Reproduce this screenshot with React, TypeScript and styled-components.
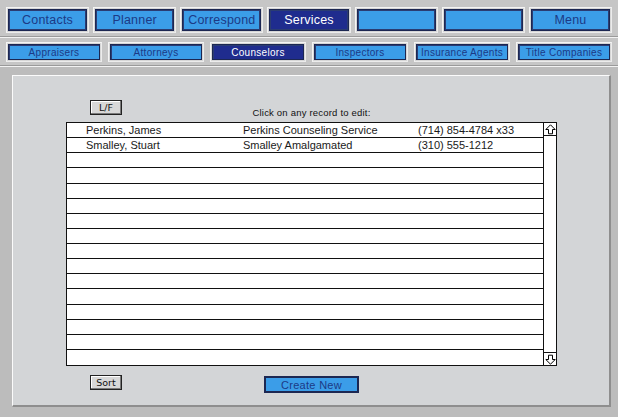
import React from "react";
import styled, { createGlobalStyle } from "styled-components";

const GlobalStyle = createGlobalStyle`
    html, body {
        margin: 0;
        padding: 0;
        background: #bcbcbc;
        font-family: "Liberation Sans", Arial, sans-serif;
    }
`;

interface Record {
    name: string;
    company: string;
    phone: string;
}

const records: Record[] = [
    { name: "Perkins, James", company: "Perkins Counseling Service", phone: "(714) 854-4784 x33" },
    { name: "Smalley, Stuart", company: "Smalley Amalgamated", phone: "(310) 555-1212" },
];

const mainTabs = ["Contacts", "Planner", "Correspond", "Services", "", "", "Menu"];
const subTabs = ["Appraisers", "Attorneys", "Counselors", "Inspectors", "Insurance Agents", "Title Companies"];

const ROW_COUNT = 16;

const ArrowIcon: React.FC<{ down?: boolean }> = ({ down }) => (
    <svg width="11" height="11" viewBox="0 0 11 11" style={{ transform: down ? "rotate(180deg)" : undefined }}>
        <polygon points="5.5,0.8 10.2,5.5 7.5,5.5 7.5,9.8 3.5,9.8 3.5,5.5 0.8,5.5" fill="#fff" stroke="#000" strokeWidth="1" />
    </svg>
);

const App: React.FC = () => {
    const rows = Array.from({ length: ROW_COUNT }, (_, i) => records[i]);
    return (
        <Page>
            <GlobalStyle />
            <Header>
                <MainRow>
                    {mainTabs.map((t, i) => (
                        <Frame key={i}>
                            <MainTab $active={t === "Services"}>{t}</MainTab>
                        </Frame>
                    ))}
                </MainRow>
                <SubRow>
                    {subTabs.map((t) => (
                        <Frame key={t}>
                            <SubTab $active={t === "Counselors"}>{t}</SubTab>
                        </Frame>
                    ))}
                </SubRow>
            </Header>
            <Body>
                <Panel>
                    <Toolbar>
                        <SmallButton>L/F</SmallButton>
                        <Caption>Click on any record to edit:</Caption>
                    </Toolbar>
                    <ListBox>
                        <Rows>
                            {rows.map((r, i) => (
                                <Row key={i}>
                                    <Cell>{r?.name}</Cell>
                                    <Cell>{r?.company}</Cell>
                                    <Cell>{r?.phone}</Cell>
                                </Row>
                            ))}
                        </Rows>
                        <ScrollBar>
                            <ScrollArrow>
                                <ArrowIcon />
                            </ScrollArrow>
                            <ScrollArrow>
                                <ArrowIcon down />
                            </ScrollArrow>
                        </ScrollBar>
                    </ListBox>
                    <Footer>
                        <SmallButton>Sort</SmallButton>
                        <CreateButton>Create New</CreateButton>
                    </Footer>
                </Panel>
            </Body>
        </Page>
    );
};

const Page = styled.div`
    width: 618px;
    height: 417px;
    overflow: hidden;
    background: #bcbcbc;
`;

const Header = styled.div`
    background: #c6c6c6;
`;

const MainRow = styled.div`
    display: grid;
    grid-template-columns: repeat(7, 1fr);
    gap: 4px;
    padding: 7px 6px 3px;
    border-bottom: 1px solid #9a9a9a;
    box-shadow: 0 1px 0 #f2f2f2;
`;

const SubRow = styled.div`
    display: grid;
    grid-template-columns: repeat(6, 1fr);
    gap: 6px;
    padding: 5px 6px 3px;
    border-bottom: 1px solid #9a9a9a;
    box-shadow: 0 1px 0 #f2f2f2;
`;

const Frame = styled.div`
    padding: 1px;
    border: 1px solid;
    border-color: #f4f4f4 #ececec #ececec #f4f4f4;
    background: #d6d6d6;
`;

const MainTab = styled.div<{ $active?: boolean }>`
    height: 20px;
    display: flex;
    align-items: center;
    justify-content: center;
    border: 1px solid #1c2752;
    box-shadow: inset 1px 1px 0 #2b3c72, inset -1px -1px 0 #2b3c72;
    background: ${(p) => (p.$active ? "#1f2c8e" : "#3b9de8")};
    color: ${(p) => (p.$active ? "#ffffff" : "#1c3a86")};
    font-size: 12.5px;
    letter-spacing: 0.2px;
`;

const SubTab = styled.div<{ $active?: boolean }>`
    height: 14px;
    display: flex;
    align-items: center;
    justify-content: center;
    border: 1px solid #1c2752;
    box-shadow: inset 1px 1px 0 #2b3c72;
    background: ${(p) => (p.$active ? "#1f2c8e" : "#3b9de8")};
    color: ${(p) => (p.$active ? "#ffffff" : "#1c3a86")};
    font-size: 10px;
    letter-spacing: 0.3px;
    white-space: nowrap;
`;

const Body = styled.div`
    padding: 9px 7px 0 12px;
`;

const Panel = styled.div`
    height: 332px;
    box-sizing: border-box;
    background: #d3d5d7;
    border-top: 1px solid #fbfbfb;
    border-left: 1px solid #fbfbfb;
    border-right: 2px solid #8e8e8e;
    border-bottom: 2px solid #8e8e8e;
    padding: 24px 52px 0 53px;
`;

const Toolbar = styled.div`
    display: grid;
    grid-template-columns: 1fr auto 1fr;
    align-items: end;
    height: 22px;
    box-sizing: border-box;
`;

const SmallButton = styled.div`
    justify-self: start;
    align-self: start;
    margin-left: 24px;
    width: 30px;
    height: 13px;
    display: flex;
    align-items: center;
    justify-content: center;
    background: #d8d8d8;
    border: 1px solid #222;
    box-shadow: inset -1px -1px 0 #7a7a7a, inset 1px 1px 0 #fff;
    font-family: "DejaVu Sans", "Liberation Sans", sans-serif;
    font-size: 9.5px;
    color: #111;
`;

const Caption = styled.div`
    font-size: 9.5px;
    color: #111;
    letter-spacing: 0.2px;
    padding-bottom: 4px;
`;

const ListBox = styled.div`
    display: flex;
    height: 244px;
    box-sizing: border-box;
    border: 1px solid #111;
    background: #fff;
`;

const Rows = styled.div`
    flex: 1;
    display: grid;
    grid-template-rows: repeat(${ROW_COUNT}, 1fr);
`;

const Row = styled.div`
    display: grid;
    grid-template-columns: 157px 175px 1fr;
    border-bottom: 1px solid #111;
    padding-left: 19px;
    align-items: center;
    &:last-child {
        border-bottom: none;
    }
`;

const Cell = styled.div`
    font-size: 11px;
    color: #1a1a1a;
    white-space: nowrap;
`;

const ScrollBar = styled.div`
    width: 12px;
    border-left: 1px solid #111;
    display: flex;
    flex-direction: column;
    justify-content: space-between;
    background: #fff;
`;

const ScrollArrow = styled.div`
    height: 12px;
    display: flex;
    align-items: center;
    justify-content: center;
    border-bottom: 1px solid #111;
    &:last-child {
        border-bottom: none;
        border-top: 1px solid #111;
    }
`;

const Footer = styled.div`
    display: grid;
    grid-template-columns: 1fr auto 1fr;
    align-items: start;
    padding-top: 9px;
`;

const CreateButton = styled.div`
    width: 91px;
    height: 13px;
    margin-top: 1px;
    display: flex;
    align-items: center;
    justify-content: center;
    background: #3b9de8;
    border: 2px solid #1c2752;
    color: #1c3a86;
    font-size: 11px;
    letter-spacing: 0.3px;
`;

export default App;
